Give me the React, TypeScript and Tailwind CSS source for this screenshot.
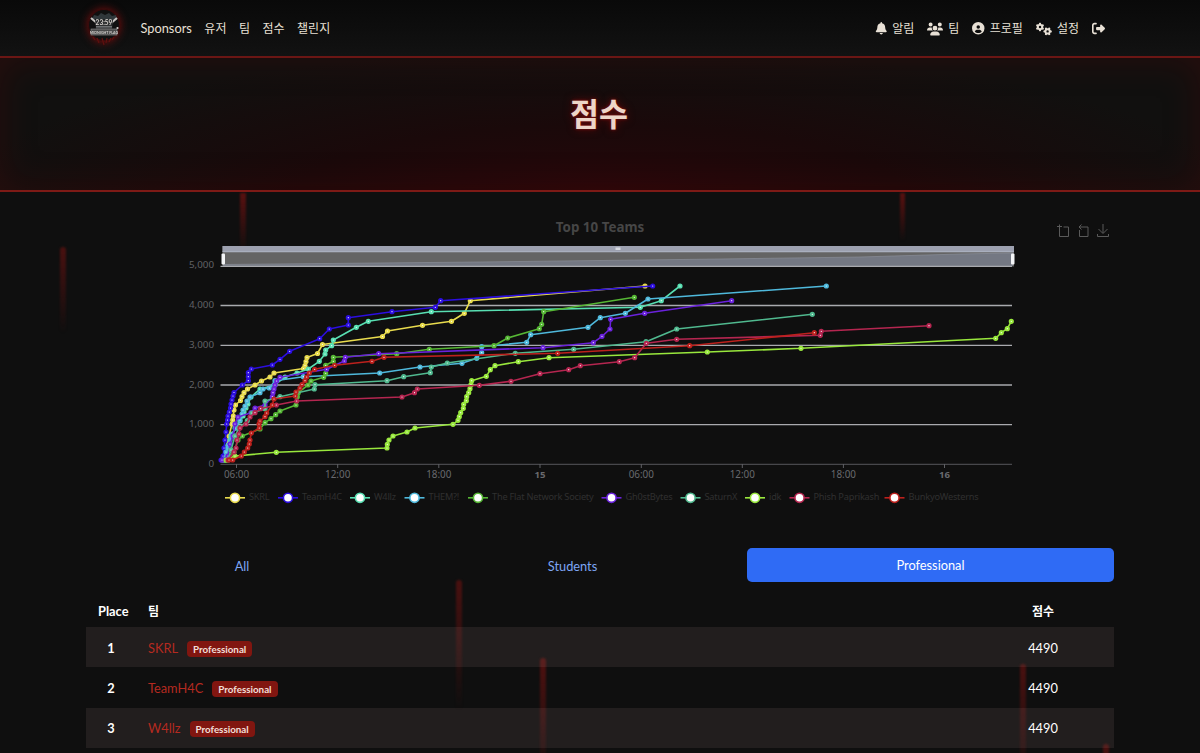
import { FaBell, FaCircleUser, FaGears, FaRightFromBracket, FaUsers } from 'react-icons/fa6';

type Team = {
  name: string;
  color: string;
  legendX: number;
  points: number[][];
};

type Standing = {
  place: number;
  name: string;
  bracket: string;
  score: number;
};

const teams: Team[] = [
  {
    name: 'SKRL',
    color: '#e9dc4e',
    legendX: 235,
    points: [
      [222, 460], [226, 448], [229, 436], [232, 424], [232.7, 420], [233.3, 416], [234, 410], [235.5, 405],
      [240.5, 400.5], [242, 396.5], [244, 392.7], [247.5, 389], [255, 385], [261.5, 381], [270, 377], [274, 373],
      [303.5, 368.5], [305, 365.5], [306, 361.5], [307, 357.5], [317.5, 353.5], [322.5, 344.5], [382.5, 336.5],
      [387.5, 331], [422.5, 325.3], [451.5, 321.3], [464.3, 313.3], [470.3, 300.7], [645, 286],
    ],
  },
  {
    name: 'TeamH4C',
    color: '#2c0ee0',
    legendX: 288,
    points: [
      [221, 460], [223, 456], [224, 448], [225, 440], [226, 432], [226.7, 424], [227.5, 420], [228, 416],
      [229.3, 412], [230.5, 408], [231, 404], [232, 400], [233, 396], [234, 392.5], [242.3, 385], [248.3, 380.7],
      [248.3, 376.7], [248.3, 372.7], [251.3, 369], [272.3, 365], [280, 359.3], [289.7, 351.3], [319.7, 338.7],
      [329.3, 329], [348.3, 325], [348.3, 317.7], [392, 311.7], [435.3, 307.3], [440.7, 300.7], [652.7, 286],
    ],
  },
  {
    name: 'W4llz',
    color: '#58dfb2',
    legendX: 360,
    points: [
      [225, 460], [227, 456], [228, 448], [230, 440], [232, 434], [236, 428], [240, 421], [243, 416], [244, 412],
      [246, 408], [248, 404], [251, 397], [260, 389], [275, 385], [285, 377], [297, 373], [308.3, 369],
      [319.3, 361.3], [325, 354], [325.7, 350], [331.7, 345.7], [333.3, 340], [356.3, 327.3], [368.3, 321.3],
      [431.3, 311.7], [640.3, 307.3], [661.3, 300.7], [680, 286],
    ],
  },
  {
    name: 'THEM?!',
    color: '#4fb9dc',
    legendX: 414.5,
    points: [
      [224, 460], [226, 452], [228, 445], [231, 436], [235, 428], [240, 420], [242, 414], [243, 410], [245, 406],
      [247, 401], [250, 397], [260, 392.7], [263, 389], [269.3, 388], [275, 380.7], [303.3, 376.7], [379.7, 373],
      [420, 367], [462, 363.3], [476.7, 358.3], [481.7, 352.7], [481.7, 346.7], [526.7, 342.3], [530.7, 334.7],
      [588, 327.3], [600.3, 317.7], [625.3, 313.3], [648, 299], [826.3, 286],
    ],
  },
  {
    name: 'The Flat Network Society',
    color: '#56b735',
    legendX: 478,
    points: [
      [226, 460], [229, 456], [234, 452], [238, 440], [242.3, 436], [260, 429], [265, 422.7], [271, 418.7],
      [275.7, 414.7], [280, 411], [296, 405], [297.3, 396.7], [298.3, 392.7], [308, 385], [311, 381],
      [323.7, 377.3], [325.7, 373.3], [325.7, 365.3], [333.3, 361.3], [333.3, 357.3], [396.7, 353.7],
      [429.3, 349.3], [494, 345.7], [507.7, 338], [539.3, 328.7], [541.7, 324.3], [543.7, 311.7], [634.3, 297.3],
    ],
  },
  {
    name: 'Gh0stBytes',
    color: '#6a22dc',
    legendX: 611.5,
    points: [
      [222, 460], [228, 456], [230, 444], [233, 436], [235, 424], [238, 417], [251, 412.7], [255, 408],
      [265, 405], [272.3, 396.7], [273, 392.7], [274, 389], [275, 385], [276.7, 381], [280, 377.3],
      [326.7, 369.3], [344.3, 361], [345.3, 357.3], [378.7, 353.7], [543, 347.7], [593.3, 342.7], [602, 336.3],
      [610, 329], [610.7, 319.3], [644.7, 313.3], [731.7, 300.7],
    ],
  },
  {
    name: 'SaturnX',
    color: '#50b98f',
    legendX: 690.5,
    points: [
      [228, 460], [231, 450], [235, 436], [239, 428], [247.3, 420.7], [252, 413], [265, 408.7], [265, 401],
      [280, 396.7], [314.3, 389], [315, 384.7], [387, 380.7], [403.7, 376.7], [430.3, 372.7], [431.3, 367],
      [447.3, 363], [515.3, 353.3], [573.7, 349.3], [646, 341.7], [676.7, 329], [812.3, 314.3],
    ],
  },
  {
    name: 'idk',
    color: '#99e83d',
    legendX: 755,
    points: [
      [226, 460], [235, 456], [276.3, 452.3], [387, 448], [387.3, 444.3], [389, 440], [393, 436], [407, 432],
      [415, 428], [453, 424.3], [458, 420.3], [459.3, 416.7], [460.7, 412.7], [463.3, 408.3], [463.7, 404.3],
      [466.3, 400.7], [466.7, 396.7], [468.7, 392.7], [470, 388.7], [471, 384.7], [471.7, 380.7], [486.3, 376.3],
      [490.3, 369.7], [495, 365.7], [518.3, 361.7], [549, 357.7], [707.3, 352], [801, 348.3], [995.7, 338.3],
      [1001.3, 332.7], [1007.3, 328.7], [1011.3, 321.3],
    ],
  },
  {
    name: 'Phish Paprikash',
    color: '#b52650',
    legendX: 799.5,
    points: [
      [228, 460], [234, 452], [236, 448], [237, 440], [239, 434], [240, 428], [246, 424], [250, 417],
      [255, 412.7], [260.7, 408.7], [276.3, 405], [296.7, 401], [402, 397], [414.5, 392.7], [417.3, 389],
      [479.3, 385.3], [511, 381.3], [540, 373.7], [568.7, 369.7], [580.3, 365.7], [619.3, 361.7],
      [634.7, 357.7], [646.3, 343.3], [676.7, 339.3], [820.3, 335.3], [821.3, 331.3], [929, 325.7],
    ],
  },
  {
    name: 'BunkyoWesterns',
    color: '#bd211d',
    legendX: 894.5,
    points: [
      [229, 460], [232.7, 460], [241.3, 456], [244.3, 452], [247.7, 448], [249.3, 444], [250, 440], [251.3, 433],
      [259.3, 428], [259, 424], [260, 421], [265, 416.7], [266.7, 413], [272.3, 405], [274, 399], [295.3, 396],
      [296, 392], [300, 388], [302, 384.5], [305, 380.7], [306.7, 377], [309.3, 373], [314.7, 369.3],
      [334.7, 365.3], [372, 361.3], [384, 357.3], [557.7, 353.3], [689.7, 345.7], [814.3, 332.7],
    ],
  },
];

const yTicks = [
  { label: '5,000', y: 265 },
  { label: '4,000', y: 305.5 },
  { label: '3,000', y: 345.3 },
  { label: '2,000', y: 385 },
  { label: '1,000', y: 424.7 },
  { label: '0', y: 464.3 },
];

const xTicks = [
  { label: '06:00', x: 236.5 },
  { label: '12:00', x: 337.7 },
  { label: '18:00', x: 438.8 },
  { label: '15', x: 540, bold: true },
  { label: '06:00', x: 641.3 },
  { label: '12:00', x: 742.3 },
  { label: '18:00', x: 843.4 },
  { label: '16', x: 944.5, bold: true },
];

const standings: Standing[] = [
  { place: 1, name: 'SKRL', bracket: 'Professional', score: 4490 },
  { place: 2, name: 'TeamH4C', bracket: 'Professional', score: 4490 },
  { place: 3, name: 'W4llz', bracket: 'Professional', score: 4490 },
];

// Blood drips running down behind the content
function Drips() {
  return (
    <div className="pointer-events-none absolute inset-0">
      <div className="absolute left-[240px] top-[193px] h-[60px] w-[6px] bg-gradient-to-b from-[#5a1110] to-transparent blur-[1px]" />
      <div className="absolute left-[900px] top-[193px] h-[48px] w-[5px] bg-gradient-to-b from-[#5a1110] to-transparent blur-[1px]" />
      <div className="absolute left-[60px] top-[247px] h-[86px] w-[6px] rounded-t-full bg-gradient-to-b from-[#4a1110] to-transparent blur-[1px]" />
      <div className="absolute left-[456px] top-[580px] h-[130px] w-[6px] rounded-t-full bg-gradient-to-b from-[#4a1110] to-transparent blur-[1px]" />
      <div className="absolute left-[540px] top-[658px] h-[130px] w-[6px] rounded-t-full bg-gradient-to-b from-[#4f1110] to-transparent blur-[1px]" />
      <div className="absolute left-[1020px] top-[664px] h-[130px] w-[6px] rounded-t-full bg-gradient-to-b from-[#4a1110] to-transparent blur-[1px]" />
      <div className="absolute left-[1103px] top-[744px] h-[130px] w-[6px] rounded-t-full bg-gradient-to-b from-[#4a1110] to-transparent blur-[1px]" />
    </div>
  );
}

function Logo() {
  return (
    <svg width="40" height="44" viewBox="0 0 40 44" className="drop-shadow-[0_0_4px_#7a0d0d]">
      <circle cx="20" cy="21" r="15.500" fill="#101010" stroke="#380c0c" strokeWidth="1.2" />
      <path d="M8 15l2-4 4 1 3-3 4 2 4-2 3 3 4-1 1 5z" fill="#30373a" />
      <path d="M7 14l7 6M33 14l-7 6" stroke="#c5c2bf" strokeWidth="2.2" />
      <path d="M11 16h18l-1 9H12z" fill="#2d2f30" />
      <text x="20" y="20.500" textAnchor="middle" fill="#d6d1cd" className="font-['Lato'] text-[6.5px] font-bold">23:59</text>
      <path d="M12 22.800h16" stroke="#77797a" strokeWidth="1.4" />
      <rect x="7" y="25" width="26" height="6" fill="#4a4a4a" stroke="#929292" strokeWidth="0.6" />
      <text x="20" y="29.600" textAnchor="middle" fill="#d2cfcc" className="font-['Lato'] text-[3.6px] font-bold">MIDNIGHT FLAG</text>
      <path d="M9 33l2 3m2-2l2 5m3-5l2 7m3-7l-1 5m5-5l-2 4m5-5l-2 3" stroke="#5f100f" strokeWidth="1.2" />
      <circle cx="33.500" cy="24" r="1.1" fill="#d6d1cd" />
    </svg>
  );
}

function Navbar() {
  return (
    <header className="relative flex h-[58px] items-center border-b-2 border-[#6b1614] bg-gradient-to-b from-[#090909] to-[#121212] px-[84px] text-[12px] text-[#e8e0d5]">
      <div className="-mt-1">
        <Logo />
      </div>
      <nav className="ml-[16.5px] flex items-center gap-[12.5px] pt-px">
        <a className="text-[12.8px]">Sponsors</a>
        <a>유저</a>
        <a>팀</a>
        <a>점수</a>
        <a>챌린지</a>
      </nav>
      <nav className="ml-auto mr-[11px] flex items-center gap-[13px] pt-px">
        <a className="flex items-center gap-[5px]"><FaBell size={12.5} />알림</a>
        <a className="flex items-center gap-[5px]"><FaUsers size={16} />팀</a>
        <a className="flex items-center gap-[5px]"><FaCircleUser size={12.5} />프로필</a>
        <a className="flex items-center gap-[5px]"><FaGears size={16} />설정</a>
        <a><FaRightFromBracket size={13} /></a>
      </nav>
    </header>
  );
}

function Hero() {
  return (
    <section className="relative flex h-[134px] items-center justify-center border-b-2 border-[#7e1a16] bg-[#111] bg-[radial-gradient(ellipse_at_bottom,#26070a_0%,#1a090a_35%,#11100f_75%)] pb-[19px] shadow-[inset_0_0_36px_rgba(100,8,8,0.28)]">
      <h1 className="mr-[2px] text-[31.5px] font-bold leading-none text-[#edd5c8] [text-shadow:0_0_3px_#8c1010,0_0_9px_#600808]">점수</h1>
    </section>
  );
}

function ScoreChart() {
  return (
    <svg width="1028" height="330" viewBox="86 192 1028 330" className="block font-['Noto_Sans']">
      <text x="600" y="231.500" textAnchor="middle" fill="#464646" className="text-[13.4px] font-bold">Top 10 Teams</text>

      {/* Toolbox */}
      <g fill="none" stroke="#5a5a5a" strokeWidth="1">
        <path d="M1057 226.500h5M1059.500 224.500v12h9v-9.500h-5" />
        <path d="M1079.500 230v6.500h8.500v-9.500h-9M1081.500 224.500l-2.500 2.500 2.500 2.500" />
        <path d="M1103 224v9M1098.500 229l4.500 4.500 4.500-4.500M1097.500 234v2.500h11v-2.500" />
      </g>

      {/* Data zoom slider */}
      <rect x="222.500" y="246" width="791.500" height="20.500" fill="#646464" />
      <path d="M223 264.500L480 262L720 259L860 257L960 254L1013 253V266H223z" fill="#747883" />
      <path d="M223 264.500L480 262L720 259L860 257L960 254L1013 253" fill="none" stroke="#8a8e98" strokeWidth="0.7" />
      <rect x="222.500" y="246" width="791.500" height="6" fill="#9da1b0" />
      <path d="M222.500 251.800h791.500" stroke="#b4bac9" strokeWidth="0.8" />
      <rect x="615.500" y="247.500" width="5" height="2.500" fill="#d5d8df" />

      {yTicks.map((tick) => (
        <g key={tick.label}>
          <path
            d={`M220.500 ${tick.y === 265 ? 266.3 : tick.y}H1012`}
            stroke={tick.label === '0' ? '#55565b' : '#a9aaae'}
            strokeWidth={tick.label === '0' ? 1 : 1.3}
          />
          <text x="214" y={tick.y + 2.7} textAnchor="end" fill="#616266" className="text-[9.8px]">{tick.label}</text>
        </g>
      ))}
      <rect x="221.500" y="253.500" width="3.500" height="11" rx="1" fill="#f4f5f7" />
      <rect x="1011" y="253.500" width="3.500" height="11" rx="1" fill="#f4f5f7" />

      {xTicks.map((tick) => (
        <g key={tick.x}>
          <path d={`M${tick.x} 464v4`} stroke="#5f6064" />
          <text
            x={tick.x}
            y="477.500"
            textAnchor="middle"
            fill="#68696d"
            className={tick.bold ? 'text-[9.6px] font-bold' : 'text-[9.9px]'}
          >
            {tick.label}
          </text>
        </g>
      ))}

      {teams.map((team) => (
        <g key={team.name} stroke={team.color}>
          <polyline points={team.points.map((p) => p.join(',')).join(' ')} fill="none" strokeWidth="1.6" strokeLinejoin="bevel" />
          {team.points.map(([x, y], i) => (
            <circle key={i} cx={x} cy={y} r="1.6" fill="#fff" strokeWidth="2" />
          ))}
        </g>
      ))}

      {teams.map((team) => (
        <g key={team.name}>
          <path d={`M${team.legendX - 10} 497.800h20`} stroke={team.color} strokeWidth="1.6" />
          <circle cx={team.legendX} cy="497.800" r="4.600" fill="#fff" stroke={team.color} strokeWidth="1.6" />
          <text x={team.legendX + 14} y="499.500" fill="#303030" className="font-['Noto_Sans'] text-[9.2px] tracking-[-0.2px]">{team.name}</text>
        </g>
      ))}
    </svg>
  );
}

function BracketTabs() {
  return (
    <div className="mt-[26px] flex h-[34px] items-center text-center text-[12.8px] text-[#7ea6f4]">
      <a className="w-[312px] pt-[3px]">All</a>
      <a className="w-[349px] pt-[3px]">Students</a>
      <a className="flex h-full flex-1 items-center justify-center rounded-[5px] bg-[#2f6bf5] pt-[2px] text-white">Professional</a>
    </div>
  );
}

function Scoreboard() {
  return (
    <table className="mt-[15px] w-full table-fixed text-[12.8px] text-white">
      <colgroup>
        <col className="w-[50px]" />
        <col />
        <col className="w-[142px]" />
      </colgroup>
      <thead>
        <tr className="h-[30px]">
          <th className="pl-[12px] text-left">Place</th>
          <th className="pl-[12px] text-left text-[12px]">팀</th>
          <th className="text-[12px]">점수</th>
        </tr>
      </thead>
      <tbody>
        {standings.map((row) => (
          <tr key={row.place} className="h-[40.3px] odd:bg-[#ffc8c8]/8">
            <td className="pt-[2px] text-center font-bold">{row.place}</td>
            <td className="pl-[12px] pt-[2px]">
              <span className="text-[#b52a20]">{row.name}</span>
              <span className="ml-[9px] inline-flex h-4 items-center rounded-[4px] bg-[#811610] px-[6px] text-[9.8px] font-bold text-[#f3dfd8]">
                {row.bracket}
              </span>
            </td>
            <td className="pt-[2px] text-center">{row.score}</td>
          </tr>
        ))}
      </tbody>
    </table>
  );
}

export default function App() {
  return (
    <div className="relative h-screen w-[1200px] overflow-hidden bg-[#0f0f0f] font-['Lato','Noto_Sans_CJK_KR',sans-serif]">
      <Drips />
      <Navbar />
      <Hero />
      <main className="relative mx-auto w-[1028px]">
        <ScoreChart />
        <BracketTabs />
        <Scoreboard />
      </main>
    </div>
  );
}
